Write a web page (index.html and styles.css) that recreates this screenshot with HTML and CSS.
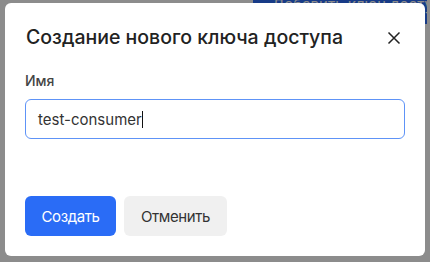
FILE: index.html
```html
<!DOCTYPE html>
<html lang="ru">
<head>
    <meta charset="UTF-8">
    <meta name="viewport" content="width=device-width, initial-scale=1.0">
    <title>Ключи доступа</title>
    <link rel="stylesheet" href="styles.css">
</head>
<body>
    <div class="page">
        <div class="toolbar">
            <button class="add-button">Добавить ключ доступа</button>
        </div>
    </div>

    <div class="overlay">
        <div class="modal">
            <div class="modal-header">
                <h2 class="modal-title">Создание нового ключа доступа</h2>
                <button class="close-button" aria-label="Закрыть">
                    <svg width="14" height="14" viewBox="0 0 14 14">
                        <path d="M1.5 1.5 L12.5 12.5 M12.5 1.5 L1.5 12.5" stroke="#222" stroke-width="1.5" fill="none"/>
                    </svg>
                </button>
            </div>

            <label class="field-label" for="consumer-name">Имя</label>
            <div class="field-input">
                <span class="field-value">test-consumer</span><span class="caret"></span>
            </div>

            <div class="modal-actions">
                <button class="btn btn-primary">Создать</button>
                <button class="btn btn-secondary">Отменить</button>
            </div>
        </div>
    </div>
</body>
</html>
```

FILE: styles.css
```css
body {
    font-family: Inter, "Noto Sans", sans-serif;
    background-color: #ffffff;
    margin: 0;
    padding: 0;
}

.page {
    height: 262px;
}

.toolbar {
    display: flex;
    justify-content: flex-end;
    padding-right: 3px;
}

.add-button {
    background-color: #2a6cf6;
    color: white;
    border: none;
    font-family: inherit;
    font-size: 15px;
    line-height: 18px;
    height: 38px;
    margin-top: -14px;
    padding: 0 19px;
    width: 174px;
    white-space: nowrap;
    overflow: hidden;
    text-align: left;
}

.overlay {
    position: fixed;
    inset: 0;
    background-color: rgba(0, 0, 0, 0.45);
    padding: 3px 5px;
}

.modal {
    background-color: #ffffff;
    border-radius: 6px;
    width: 420px;
    height: 253px;
    box-sizing: border-box;
    padding: 22px 20px 20px 20px;
    display: flex;
    flex-direction: column;
}

.modal-header {
    display: flex;
    align-items: center;
    justify-content: space-between;
    height: 24px;
}

.modal-title {
    margin: 0 0 0 1px;
    font-size: 19.5px;
    line-height: 24px;
    font-weight: 500;
    color: #222;
}

.close-button {
    background: none;
    border: none;
    padding: 0;
    margin-right: 4px;
    margin-top: 2px;
    width: 14px;
    height: 14px;
    display: flex;
}

.field-label {
    margin-top: 22px;
    font-size: 14px;
    line-height: 20px;
    font-weight: 500;
    color: #444;
}

.field-input {
    margin-top: 8px;
    height: 40px;
    box-sizing: border-box;
    border: 1px solid #5e93f7;
    border-radius: 6px;
    padding: 0 0 0 12px;
    display: flex;
    align-items: center;
    font-size: 15px;
    color: #333;
}

.caret {
    width: 1px;
    height: 17px;
    background-color: #111;
}

.modal-actions {
    margin-top: auto;
    display: flex;
    gap: 8px;
}

.btn {
    height: 40px;
    border: none;
    border-radius: 6px;
    font-family: inherit;
    font-size: 15px;
    letter-spacing: -0.4px;
}

.btn-primary {
    background-color: #2a6cf6;
    color: white;
    width: 91px;
}

.btn-secondary {
    background-color: #f0f0f0;
    color: #333;
    width: 103px;
}
```
